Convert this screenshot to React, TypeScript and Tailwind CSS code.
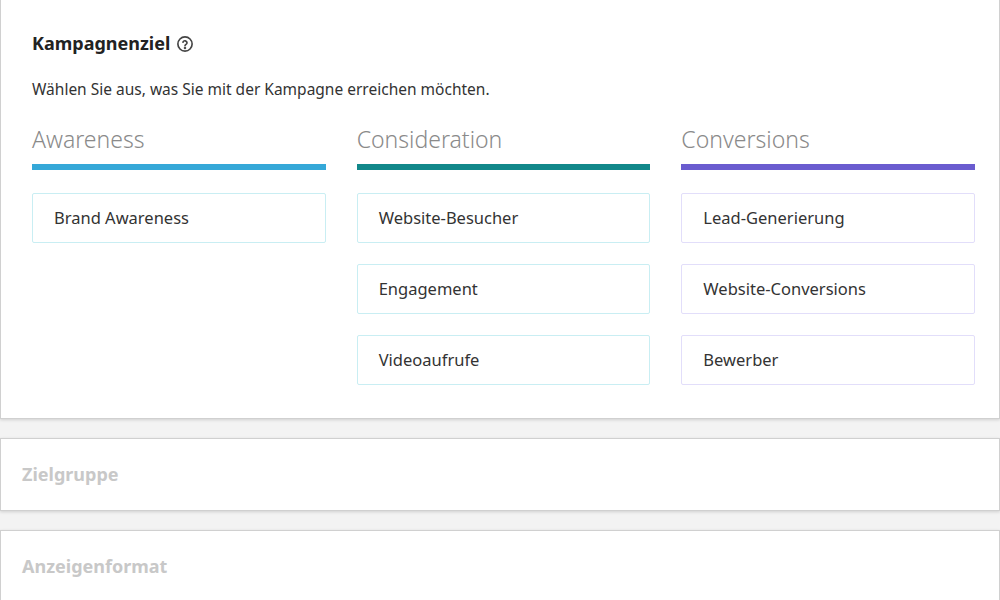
const columns = [
  { title: "Awareness", bar: "bg-[#35a8d8]", border: "border-[#c9eef3]", items: ["Brand Awareness"] },
  { title: "Consideration", bar: "bg-[#12888a]", border: "border-[#c9eef3]", items: ["Website-Besucher", "Engagement", "Videoaufrufe"] },
  { title: "Conversions", bar: "bg-[#6a5ccf]", border: "border-[#e2defa]", items: ["Lead-Generierung", "Website-Conversions", "Bewerber"] },
];

function HelpIcon() {
  return (
    <svg width="18" height="18" viewBox="0 0 24 24" fill="none" stroke="#444" strokeWidth="2.2" strokeLinecap="round" className="ml-1.5 mt-0.5">
      <circle cx="12" cy="12" r="9.5" />
      <path d="M9.3 9.5a2.8 2.8 0 0 1 5.4 1c0 1.9-2.7 2.2-2.7 3.8" />
      <circle cx="12" cy="17.3" r="0.6" fill="#444" />
    </svg>
  );
}

export default function App() {
  return (
    <div className="w-[1000px] h-[600px] overflow-hidden bg-[#f3f3f3] font-['Noto_Sans',sans-serif] text-[#333]">
      <section className="bg-white border border-[#d0d0d0] border-t-0 shadow-[0_1px_3px_rgba(0,0,0,0.15)] h-[419px] pt-[31px] pl-[31px] pr-[24px]">
        <h2 className="flex items-center text-[18px] font-bold text-[#222] leading-6">
          Kampagnenziel <HelpIcon />
        </h2>
        <p className="mt-[24px] text-[15.5px] leading-5 text-[#333]">
          Wählen Sie aus, was Sie mit der Kampagne erreichen möchten.
        </p>
        <div className="mt-[24px] flex gap-[31px]">
          {columns.map((c) => (
            <div key={c.title} className="w-[294px]">
              <div className="text-[23px] font-light text-[#8a8a8a] leading-8">{c.title}</div>
              <div className={`mt-[9px] h-[6px] ${c.bar}`} />
              <div className="mt-[23px] flex flex-col gap-[21px]">
                {c.items.map((i) => (
                  <div key={i} className={`h-[50px] border ${c.border} rounded-[2px] flex items-center pl-[21px] text-[16.5px] text-[#333]`}>
                    {i}
                  </div>
                ))}
              </div>
            </div>
          ))}
        </div>
      </section>
      <section className="mt-[19px] bg-white border border-[#d0d0d0] shadow-[0_1px_3px_rgba(0,0,0,0.15)] h-[73px] flex items-center pl-[21px]">
        <span className="text-[18px] font-bold text-[#c8c8c8]">Zielgruppe</span>
      </section>
      <section className="mt-[19px] bg-white border border-[#d0d0d0] shadow-[0_1px_3px_rgba(0,0,0,0.15)] h-[73px] flex items-center pl-[21px]">
        <span className="text-[18px] font-bold text-[#c8c8c8]">Anzeigenformat</span>
      </section>
    </div>
  );
}
